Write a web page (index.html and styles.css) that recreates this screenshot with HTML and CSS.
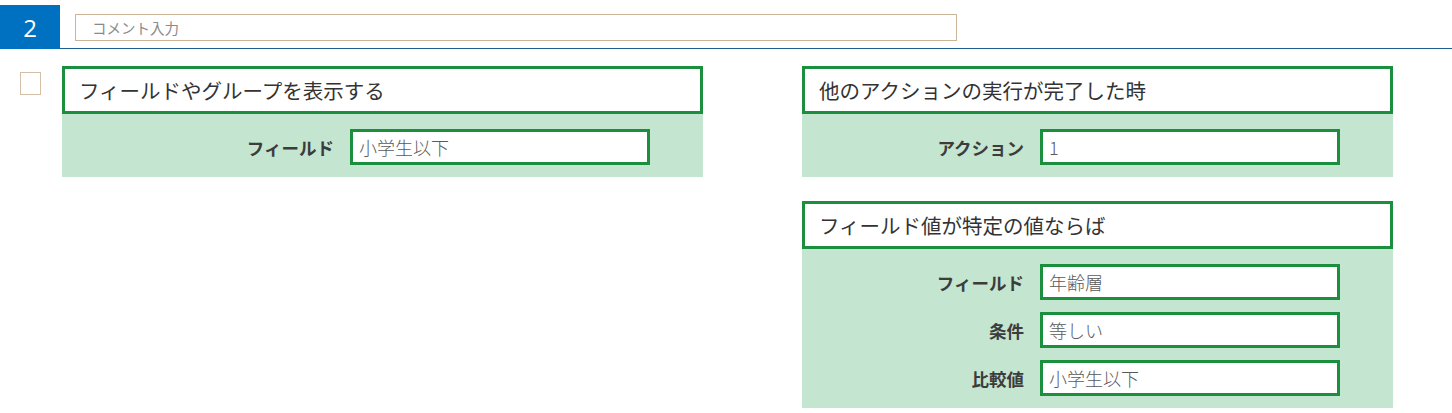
FILE: index.html
```html
<!DOCTYPE html>
<html lang="ja">
<head>
<meta charset="utf-8">
<link rel="stylesheet" href="styles.css">
</head>
<body>
<div class="header">
  <div class="step">2</div>
  <div class="comment">コメント入力</div>
</div>
<div class="main">
  <div class="check"></div>
  <div class="col col-left">
    <div class="card">
      <div class="card-title">フィールドやグループを表示する</div>
      <div class="card-body">
        <div class="row"><span class="label">フィールド</span><span class="input">小学生以下</span></div>
      </div>
    </div>
  </div>
  <div class="col col-right">
    <div class="card">
      <div class="card-title">他のアクションの実行が完了した時</div>
      <div class="card-body">
        <div class="row"><span class="label">アクション</span><span class="input">1</span></div>
      </div>
    </div>
    <div class="card">
      <div class="card-title">フィールド値が特定の値ならば</div>
      <div class="card-body">
        <div class="row"><span class="label">フィールド</span><span class="input">年齢層</span></div>
        <div class="row"><span class="label">条件</span><span class="input">等しい</span></div>
        <div class="row"><span class="label">比較値</span><span class="input">小学生以下</span></div>
      </div>
    </div>
  </div>
</div>
</body>
</html>
```

FILE: styles.css
```css
* { box-sizing: border-box; }
body {
  margin: 0;
  background: #fff;
  font-family: "Noto Sans CJK JP", "Noto Sans", sans-serif;
  color: #333;
}
.header {
  display: flex;
  align-items: flex-start;
  height: 49px;
  border-bottom: 1px solid #1e5f8f;
}
.step {
  margin-top: 5px;
  width: 60px;
  height: 44px;
  background: #0070c0;
  color: #fff;
  font-family: "Open Sans", "Noto Sans", sans-serif;
  font-size: 24px;
  display: flex;
  align-items: center;
  justify-content: center;
}
.comment {
  margin-top: 14px;
  margin-left: 15px;
  width: 882px;
  height: 27px;
  border: 1px solid #cbb497;
  padding-left: 16px;
  font-size: 14.5px;
  line-height: 25px;
  color: #8a8a8a;
}
.main {
  display: flex;
  align-items: flex-start;
  padding-top: 17px;
  padding-left: 20px;
}
.check {
  margin-top: 6px;
  width: 21px;
  height: 23px;
  border: 1px solid #d4bfa8;
  margin-right: 21px;
}
.col {
  display: flex;
  flex-direction: column;
  gap: 24px;
}
.col-left { width: 641px; margin-right: 99px; }
.col-right { width: 591px; }
.card-title {
  height: 48px;
  border: 3px solid #1b8f3e;
  padding-left: 14px;
  font-size: 20.5px;
  line-height: 43px;
  color: #333;
  background: #fff;
}
.card-body {
  background: #c4e5cf;
  padding: 15px 53px 12px 0;
  display: flex;
  flex-direction: column;
  gap: 12px;
}
.row {
  display: flex;
  justify-content: flex-end;
  align-items: center;
  gap: 16px;
}
.label {
  font-size: 17.5px;
  font-weight: bold;
  color: #3c3c3c;
}
.input {
  width: 300px;
  height: 36px;
  border: 3px solid #1b8f3e;
  background: #fff;
  padding-left: 6px;
  font-size: 18px;
  line-height: 30px;
  color: #5a5a5a;
  font-weight: 300;
}
```
